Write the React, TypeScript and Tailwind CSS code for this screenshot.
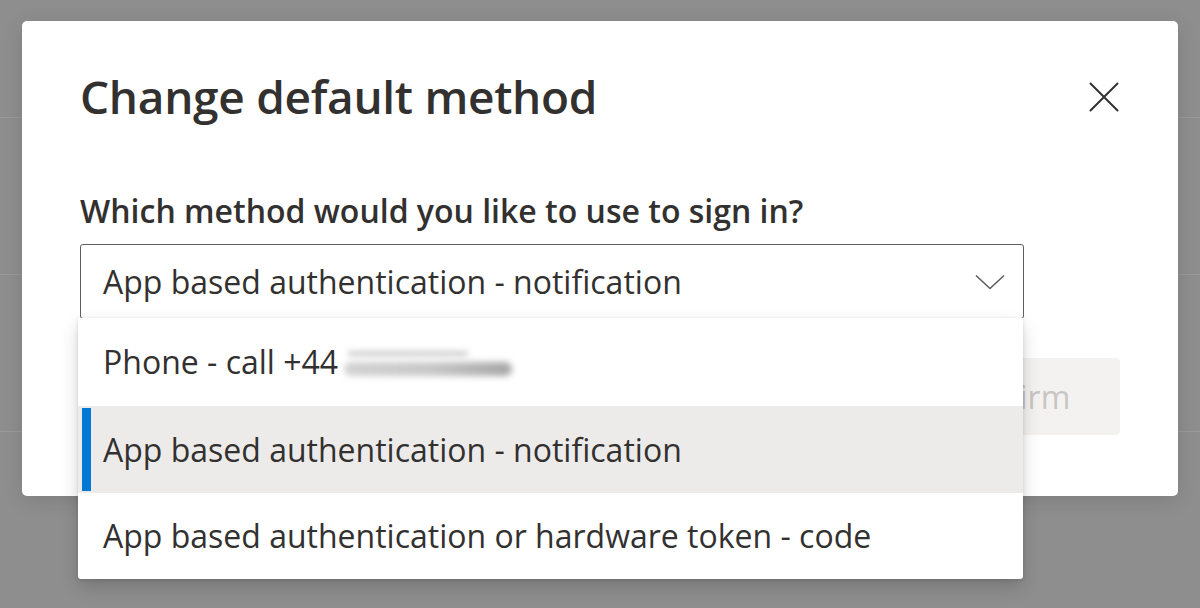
import React from "react";

const font = { fontFamily: '"Open Sans", "Noto Sans", sans-serif' };

function CloseIcon() {
  return (
    <svg width="30" height="30" viewBox="0 0 30 30" fill="none">
      <path d="M1.5 1.5 L28.5 28.5 M28.5 1.5 L1.5 28.5" stroke="#323130" strokeWidth="2" strokeLinecap="round" />
    </svg>
  );
}

function Chevron() {
  return (
    <svg width="30" height="16" viewBox="0 0 30 16" fill="none">
      <path d="M1 1.5 L15 14.5 L29 1.5" stroke="#605e5c" strokeWidth="1.6" strokeLinejoin="round" />
    </svg>
  );
}

export default function App() {
  return (
    <div className="grid h-[608px] w-[1200px] overflow-hidden bg-[#8e8e8e] text-[#323130]" style={font}>
      {/* page behind overlay */}
      <div className="col-start-1 row-start-1 flex flex-col">
        <div className="h-[118px] border-b border-[#999999]" />
        <div className="h-[157px] border-b border-[#999999]" />
        <div className="h-[157px] border-b border-[#999999]" />
      </div>

      {/* dialog */}
      <div className="col-start-1 row-start-1 ml-[22px] mt-[21px] h-[475px] w-[1156px] rounded-[5px] bg-white pl-[58px] pr-[58px] pt-[52px] shadow-[0_4px_20px_rgba(0,0,0,0.12)]">
        <div className="flex h-[46px] items-center justify-between">
          <h1 className="text-[46px] font-semibold leading-none tracking-[-0.3px]">Change default method</h1>
          <button className="mr-[1px] mt-[2px] flex h-[30px] w-[30px] items-center justify-center">
            <CloseIcon />
          </button>
        </div>

        <div className="mt-[76px] text-[32px] font-semibold leading-none">
          Which method would you like to use to sign in?
        </div>

        <div className="relative mt-[17px] w-[944px]">
          <div className="flex h-[75px] items-center justify-between rounded-[3px] border border-[#605e5c] pl-[22px] pr-[18px]">
            <span className="text-[32px] leading-none">App based authentication - notification</span>
            <Chevron />
          </div>

          {/* dropdown menu */}
          <div className="absolute left-[-2px] top-[74px] z-10 w-[945px] rounded-b-[3px] bg-white shadow-[0_8px_18px_rgba(0,0,0,0.16),0_1px_4px_rgba(0,0,0,0.12)]">
            <div className="flex h-[88px] items-center pl-[25px] text-[32px] leading-none">
              <span>Phone - call +44</span>
              <span className="ml-[6px] mt-[4px] flex h-[24px] w-[168px] flex-col justify-between blur-[3px]">
                <span className="ml-[4px] h-[3px] w-[120px] rounded-full bg-[#a8a8a8]" />
                <span className="h-[14px] w-full rounded-full bg-gradient-to-r from-[#d2d2d2] via-[#c8c8c8] to-[#a6a6a6]" />
              </span>
            </div>
            <div className="relative flex h-[87px] items-center bg-[#edebe9] pl-[25px] text-[32px] leading-none">
              <span className="absolute bottom-[2px] left-[4px] top-[2px] w-[9px] bg-[#0078d4]" />
              <span>App based authentication - notification</span>
            </div>
            <div className="flex h-[86px] items-center pl-[25px] text-[32px] leading-none">
              <span>App based authentication or hardware token - code</span>
            </div>
          </div>
        </div>

        <div className="mt-[39px] flex justify-end">
          <button className="flex h-[77px] w-[220px] items-center justify-center rounded-[4px] bg-[#f3f2f1] text-[32px] text-[#c8c6c4]">
            Confirm
          </button>
        </div>
      </div>
    </div>
  );
}
